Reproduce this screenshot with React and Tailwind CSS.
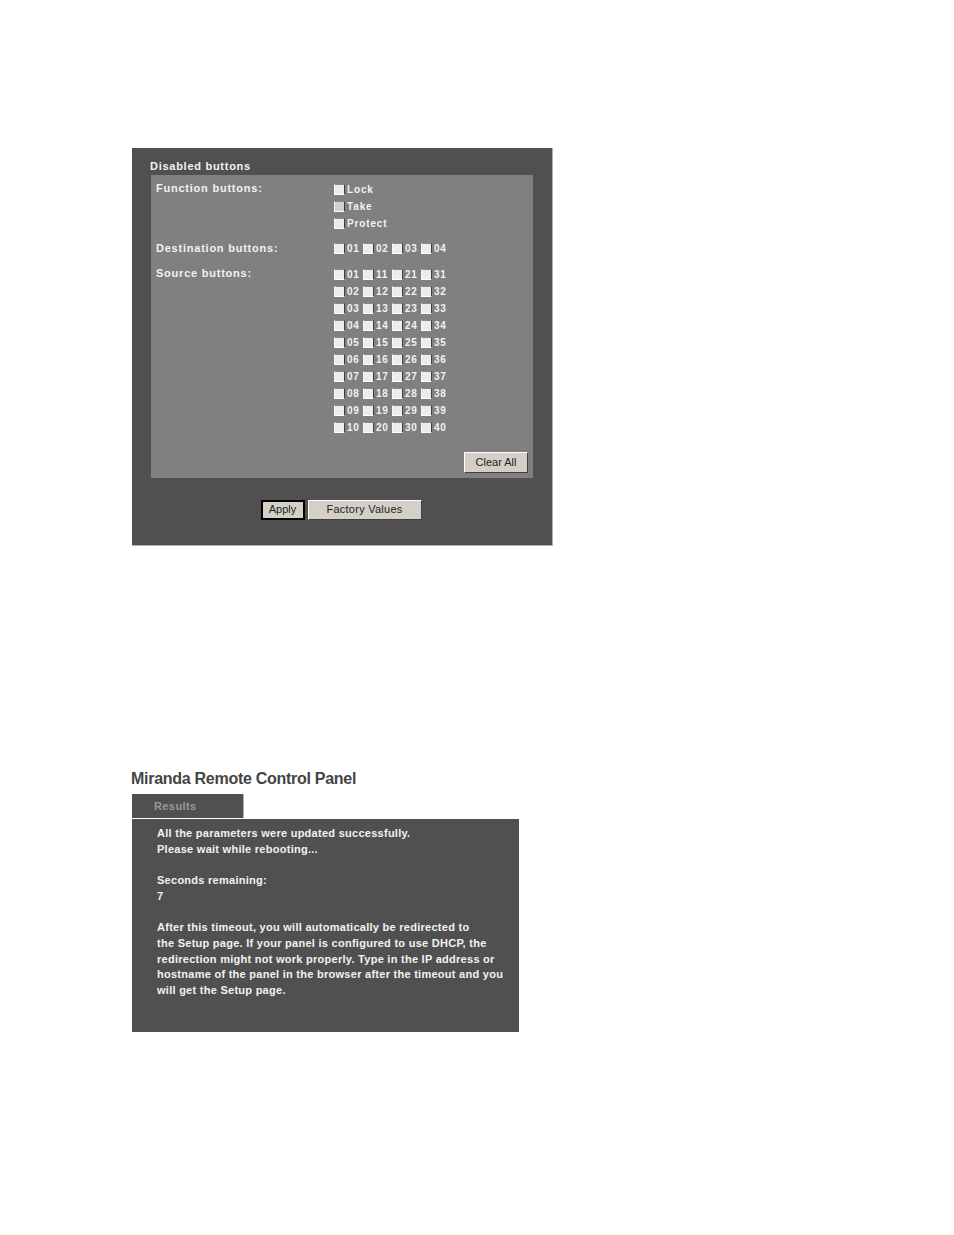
const FONT = "font-['Liberation_Sans',Arial,sans-serif]";

const SOURCE_ROWS = [
  ['01', '11', '21', '31'],
  ['02', '12', '22', '32'],
  ['03', '13', '23', '33'],
  ['04', '14', '24', '34'],
  ['05', '15', '25', '35'],
  ['06', '16', '26', '36'],
  ['07', '17', '27', '37'],
  ['08', '18', '28', '38'],
  ['09', '19', '29', '39'],
  ['10', '20', '30', '40'],
];

const Box = ({ disabled }) => (
  <span
    className={`block w-[11px] h-[11px] shrink-0 border-t border-l border-r border-b border-t-[#8a8a8a] border-l-[#f8f8f8] border-r-[#404040] border-b-white ${disabled ? 'bg-[#d4d0c8]' : 'bg-[#ececec]'}`}
  />
);

const Check = ({ label, disabled, wide }) => (
  <span className={`flex items-center gap-[2px] h-[17px] ${wide ? '' : 'w-[29px]'}`}>
    <Box disabled={disabled} />
    <span className={`text-[10px] font-bold text-[#f2f2f2] leading-none ${wide ? 'tracking-[0.85px]' : 'tracking-[0.7px]'}`}>{label}</span>
  </span>
);

const NumberRow = ({ items }) => (
  <div className="flex h-[17px]">
    {items.map((n) => (
      <Check key={n} label={n} />
    ))}
  </div>
);

const Label = ({ children }) => (
  <div className="w-[178px] shrink-0 text-[11px] leading-[17px] font-bold text-[#f2f2f2] tracking-[0.77px]">{children}</div>
);

const WinButton = ({ children, className }) => (
  <button
    className={`bg-[#d4d0c8] border border-t-white border-l-white border-r-[#404040] border-b-[#404040] text-[11px] text-[#222] leading-none ${className}`}
  >
    {children}
  </button>
);

const App = () => {
  return (
    <div className={`${FONT} w-[954px] h-[1235px] bg-white pl-[132px] pt-[148px]`}>
      <div className="w-[421px] h-[398px] bg-[#505050] border-b border-r border-[#b0b0b0] pt-[10px] flex flex-col">
        <h2 className="ml-[18px] mb-[1px] text-[11px] leading-[16px] font-bold text-[#f2f2f2] tracking-[0.73px]">Disabled buttons</h2>
        <div className="ml-[19px] w-[382px] h-[303px] bg-[#808080] pl-[5px] pr-[5px] pt-[5px] flex flex-col">
          <div className="flex">
            <Label>Function buttons:</Label>
            <div className="pt-[1px]">
              <Check label="Lock" wide />
              <Check label="Take" wide disabled />
              <Check label="Protect" wide />
            </div>
          </div>
          <div className="flex mt-[8px]">
            <Label>Destination buttons:</Label>
            <NumberRow items={['01', '02', '03', '04']} />
          </div>
          <div className="flex mt-[8px]">
            <Label>Source buttons:</Label>
            <div className="pt-[1px]">
              {SOURCE_ROWS.map((row) => (
                <NumberRow key={row[0]} items={row} />
              ))}
            </div>
          </div>
          <div className="flex justify-end mt-[16px]">
            <WinButton className="w-[64px] h-[21px]">Clear All</WinButton>
          </div>
        </div>
        <div className="flex justify-center gap-[3px] mt-[22px] pr-[2px]">
          <button className="w-[44px] h-[20px] pb-[2px] bg-[#d4d0c8] border-2 border-black text-[11px] text-[#222] leading-none">Apply</button>
          <WinButton className="w-[114px] h-[20px] pb-[2px] tracking-[0.25px]">Factory Values</WinButton>
        </div>
      </div>

      <h1 className="mt-[224px] text-[16px] leading-[18px] font-bold text-[#444] -ml-[1px] tracking-[-0.28px]">Miranda Remote Control Panel</h1>
      <div className="mt-[6px] w-[112px] h-[24px] bg-[#505050] border-r border-[#b0b0b0] pl-[22px] text-[11px] leading-[24px] font-bold text-[#999] tracking-[0.4px]">Results</div>
      <div className="mt-[1px] w-[387px] h-[213px] bg-[#505050] pl-[25px] pt-[7px] text-[11px] leading-[15.7px] font-bold text-[#f2f2f2] tracking-[0.27px]">
        <p>All the parameters were updated successfully.</p>
        <p>Please wait while rebooting...</p>
        <p className="mt-[15.7px]">Seconds remaining:</p>
        <p>7</p>
        <p className="mt-[15.7px]">After this timeout, you will automatically be redirected to</p>
        <p>the Setup page. If your panel is configured to use DHCP, the</p>
        <p>redirection might not work properly. Type in the IP address or</p>
        <p>hostname of the panel in the browser after the timeout and you</p>
        <p>will get the Setup page.</p>
      </div>
    </div>
  );
};

export default App;
